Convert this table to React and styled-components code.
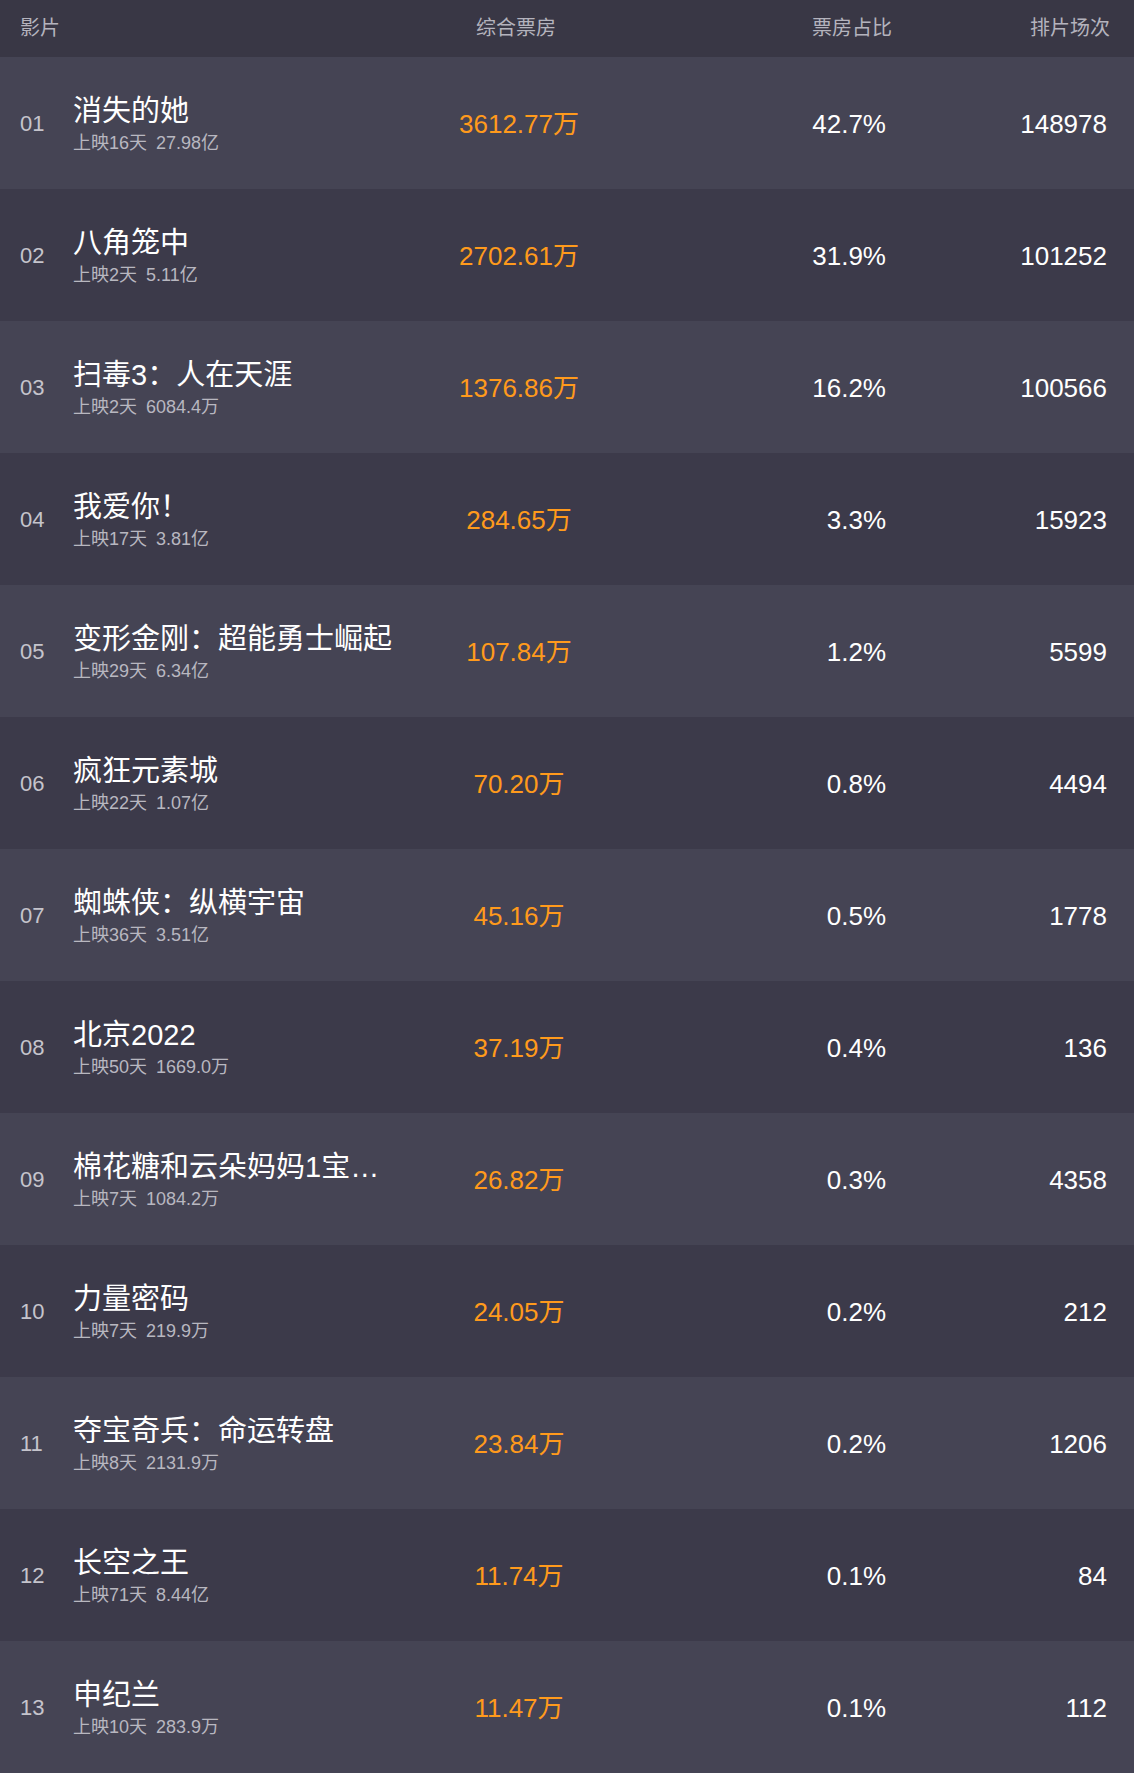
import React from "react";
import styled, { createGlobalStyle } from "styled-components";

const Global = createGlobalStyle`
  html, body { margin: 0; padding: 0; background: #393745; }
  body { font-family: "Liberation Sans", Arial, "Noto Sans CJK SC", sans-serif; }
  * { box-sizing: border-box; }
`;

const movies = [
  ["01", "消失的她", "上映16天", "27.98亿", "3612.77万", "42.7%", "148978"],
  ["02", "八角笼中", "上映2天", "5.11亿", "2702.61万", "31.9%", "101252"],
  ["03", "扫毒3：人在天涯", "上映2天", "6084.4万", "1376.86万", "16.2%", "100566"],
  ["04", "我爱你！", "上映17天", "3.81亿", "284.65万", "3.3%", "15923"],
  ["05", "变形金刚：超能勇士崛起", "上映29天", "6.34亿", "107.84万", "1.2%", "5599"],
  ["06", "疯狂元素城", "上映22天", "1.07亿", "70.20万", "0.8%", "4494"],
  ["07", "蜘蛛侠：纵横宇宙", "上映36天", "3.51亿", "45.16万", "0.5%", "1778"],
  ["08", "北京2022", "上映50天", "1669.0万", "37.19万", "0.4%", "136"],
  ["09", "棉花糖和云朵妈妈1宝贝芯计划", "上映7天", "1084.2万", "26.82万", "0.3%", "4358"],
  ["10", "力量密码", "上映7天", "219.9万", "24.05万", "0.2%", "212"],
  ["11", "夺宝奇兵：命运转盘", "上映8天", "2131.9万", "23.84万", "0.2%", "1206"],
  ["12", "长空之王", "上映71天", "8.44亿", "11.74万", "0.1%", "84"],
  ["13", "申纪兰", "上映10天", "283.9万", "11.47万", "0.1%", "112"],
];

const Table = styled.div`
  width: 1134px;
  display: flex;
  flex-direction: column;
`;

const Header = styled.div`
  display: grid;
  grid-template-columns: 53px 322px 242px 255px 218px;
  align-items: center;
  height: 57px;
  padding: 0 24px 4px 20px;
  background: #393745;
  color: #b4b3bd;
  font-size: 20px;
  line-height: 24px;
`;

const HeadCell = styled.div`
  grid-column: ${(p) => p.$span || "auto"};
  text-align: ${(p) => p.$align || "left"};
  font-family: "Noto Sans CJK SC", sans-serif;
`;

const Row = styled.div`
  display: grid;
  grid-template-columns: 53px 322px 248px 243px 221px;
  align-items: center;
  height: 132px;
  padding: 0 27px 0 20px;
  background: ${(p) => (p.$odd ? "#454454" : "#3c3a4a")};
`;

const Index = styled.div`
  color: #c5c4cc;
  font-size: 22px;
  line-height: 26px;
  padding-top: 2px;
`;

const TitleBlock = styled.div`
  display: flex;
  flex-direction: column;
  min-width: 0;
`;

const Title = styled.div`
  color: #ffffff;
  font-size: 29px;
  line-height: 36px;
  white-space: nowrap;
  overflow: hidden;
  text-overflow: ellipsis;
`;

const Sub = styled.div`
  margin-top: 4px;
  color: #b8b7c0;
  font-size: 18px;
  line-height: 20px;
  white-space: nowrap;
`;

const SubValue = styled.span`
  margin-left: 9px;
`;

const BoxOffice = styled.div`
  color: #ff9a1c;
  font-size: 26px;
  line-height: 30px;
  text-align: center;
  padding-top: 2px;
`;

const Num = styled.div`
  color: #ffffff;
  font-size: 26px;
  line-height: 30px;
  text-align: right;
  padding-top: 2px;
`;

export default function App() {
  return (
    <>
      <Global />
      <Table>
        <Header>
          <HeadCell $span="1 / span 2">影片</HeadCell>
          <HeadCell $align="center">综合票房</HeadCell>
          <HeadCell $align="right">票房占比</HeadCell>
          <HeadCell $align="right">排片场次</HeadCell>
        </Header>
        {movies.map(([idx, name, days, total, box, pct, count], i) => (
          <Row key={idx} $odd={i % 2 === 0}>
            <Index>{idx}</Index>
            <TitleBlock>
              <Title>{name}</Title>
              <Sub>
                {days}
                <SubValue>{total}</SubValue>
              </Sub>
            </TitleBlock>
            <BoxOffice>{box}</BoxOffice>
            <Num>{pct}</Num>
            <Num>{count}</Num>
          </Row>
        ))}
      </Table>
    </>
  );
}
